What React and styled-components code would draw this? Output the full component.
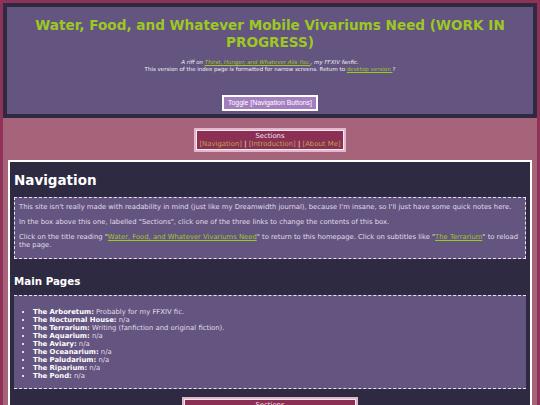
import React from 'react'
import styled, { createGlobalStyle } from 'styled-components'

const GlobalStyle = createGlobalStyle`
  html, body {
    margin: 0;
    padding: 0;
  }
  body {
    background: #8e3357;
    padding: 3px 3px 0;
    font-family: "DejaVu Sans", Verdana, sans-serif;
    color: #e2dcea;
  }
`

const Wrapper = styled.div`
  background: #a6647a;
  min-height: 402px;
  display: flex;
  flex-direction: column;
  align-items: center;
`

const Header = styled.header`
  align-self: stretch;
  background: #63557f;
  border: 4px solid #2f2a42;
  padding: 10px 10px 3px;
  text-align: center;
`

const Title = styled.h1`
  margin: 0;
  font-size: 13.6px;
  line-height: 17px;
  font-weight: bold;
  color: #9dc823;
`

const Blurb = styled.p`
  margin: 8px 0 0;
  font-size: 5.5px;
  line-height: 7px;
  color: #f2eef6;
`

const GreenLink = styled.a`
  color: #9dc823;
  text-decoration: underline;
`

const ToggleButton = styled.button`
  margin: 22px 0 0;
  background: #a47ebf;
  border: 2px solid #fff;
  color: #fff;
  font-family: "Liberation Sans", Arial, sans-serif;
  font-size: 6.9px;
  line-height: 8px;
  padding: 2px 4px;
  cursor: pointer;
`

const SectionsBox = styled.div`
  margin: ${({ $top }) => $top}px 0 0;
  background: #8c2f55;
  border: 2px solid #e4b8cb;
  outline: 1px solid #f7e8ef;
  outline-offset: -3px;
  padding: 2px ${({ $pad }) => $pad}px;
  text-align: center;
  font-size: 6.9px;
  line-height: 8px;
  color: #efe4ea;
`

const GoldLink = styled.a`
  color: #bba648;
  text-decoration: none;
`

const Main = styled.main`
  align-self: stretch;
  margin: 8px 5px 0;
  background: #2e2a41;
  border: 2px solid #fff;
  padding: 6px 4px 0;
  display: flex;
  flex-direction: column;
  align-items: center;
`

const Heading = styled.h2`
  align-self: stretch;
  margin: ${({ $mt }) => $mt}px 0 0;
  font-size: ${({ $size }) => $size}px;
  line-height: 20px;
  font-weight: bold;
  color: #fff;
`

const NoteBox = styled.div`
  align-self: stretch;
  margin-top: 7px;
  background: #63557f;
  border: 1px dashed #e8e2f0;
  padding: 5px 2px 9px 4px;
  font-size: 6.8px;
  line-height: 8px;
`

const Note = styled.p`
  margin: 0 0 7px;
  &:last-child {
    margin-bottom: 0;
  }
`

const PageBox = styled.div`
  align-self: stretch;
  margin-top: 4px;
  background: #63557f;
  border-top: 1px dashed #e8e2f0;
  border-bottom: 1px dashed #e8e2f0;
  padding: 12px 0 8px;
  font-size: 6.85px;
  line-height: 8px;
`

const PageList = styled.ul`
  margin: 0;
  padding-left: 19px;
  list-style: square;
`

const Label = styled.b`
  color: #fff;
`

const pages = [
  ['The Arboretum:', 'Probably for my FFXIV fic.'],
  ['The Nocturnal House:', 'n/a'],
  ['The Terrarium:', 'Writing (fanfiction and original fiction).'],
  ['The Aquarium:', 'n/a'],
  ['The Aviary:', 'n/a'],
  ['The Oceanarium:', 'n/a'],
  ['The Paludarium:', 'n/a'],
  ['The Riparium:', 'n/a'],
  ['The Pond:', 'n/a'],
]

const Sections = ({ top, pad }) => (
  <SectionsBox $top={top} $pad={pad}>
    Sections
    <br />
    <GoldLink href="#nav">[Navigation]</GoldLink> | <GoldLink href="#intro">[Introduction]</GoldLink> | <GoldLink href="#about">[About Me]</GoldLink>
  </SectionsBox>
)

const App = () => {
  return (
    <>
      <GlobalStyle />
      <Wrapper>
        <Header>
          <Title>Water, Food, and Whatever Mobile Vivariums Need (WORK IN PROGRESS)</Title>
          <Blurb>
            <i>A riff on <GreenLink href="#thirst">Thirst, Hunger, and Whatever Ails You </GreenLink>, my FFXIV fanfic.</i>
            <br />
            This version of the index page is formatted for narrow screens. Return to <GreenLink href="#desktop">desktop version </GreenLink>?
          </Blurb>
          <ToggleButton>Toggle [Navigation Buttons]</ToggleButton>
        </Header>

        <Sections top={10} pad={3} />

        <Main>
          <Heading $mt={2} $size={13.5}>Navigation</Heading>
          <NoteBox>
            <Note>This site isn't really made with readability in mind (just like my Dreamwidth journal), because I'm insane, so I'll just have some quick notes here.</Note>
            <Note>In the box above this one, labelled "Sections", click one of the three links to change the contents of this box.</Note>
            <Note>
              Click on the title reading "<GreenLink href="#home">Water, Food, and Whatever Vivariums Need</GreenLink>" to return to this homepage. Click on subtitles like "<GreenLink href="#terrarium">The Terrarium</GreenLink>" to reload the page.
            </Note>
          </NoteBox>

          <Heading $mt={12} $size={10.3}>Main Pages</Heading>
          <PageBox>
            <PageList>
              {pages.map(([name, text]) => (
                <li key={name}>
                  <Label>{name}</Label> {text}
                </li>
              ))}
            </PageList>
          </PageBox>

          <Sections top={8} pad={15} />
        </Main>
      </Wrapper>
    </>
  )
}

export default App
